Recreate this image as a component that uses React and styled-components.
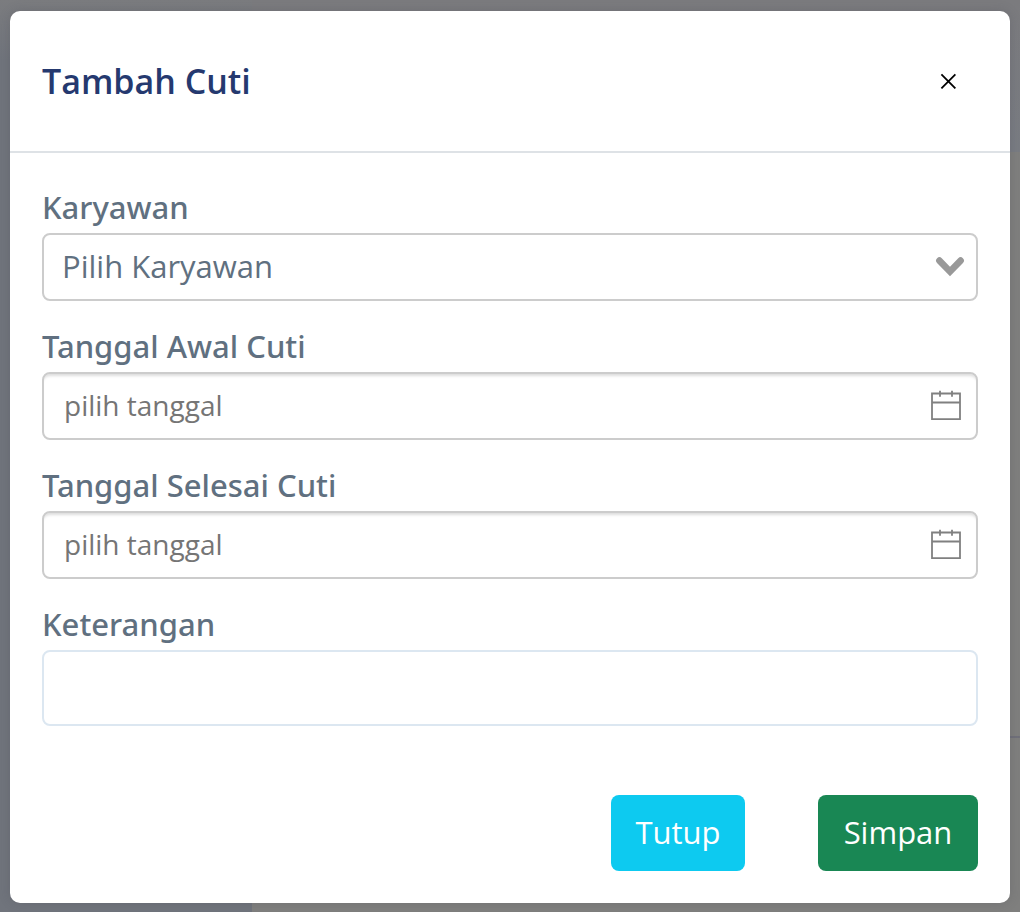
import React from "react";
import styled, { createGlobalStyle } from "styled-components";

const GlobalStyle = createGlobalStyle`
  *, *::before, *::after { box-sizing: border-box; }
  body {
    margin: 0;
    font-family: "Open Sans", "Noto Sans", sans-serif;
    font-size: 31px;
    line-height: 48px;
    color: #607080;
  }
`;

const Screen = styled.div`
  display: grid;
  min-height: 100vh;
`;

const Page = styled.div`
  grid-area: 1 / 1;
  display: grid;
  grid-template-columns: 252px 1fr;
  grid-template-rows: 152px 1fr 174px;
  background: #7f7f7e;
`;

const Sidebar = styled.div`
  grid-row: 1 / -1;
  background: linear-gradient(#7b7c7f, #70747c 60px);
`;

const TopBar = styled.div`
  background: linear-gradient(#7b7b7e, #797c83);
`;

const Panel = styled.div`
  border-bottom: 2px solid #70707a;
`;

const Overlay = styled.div`
  grid-area: 1 / 1;
  z-index: 1;
  padding: 11px 10px 9px;
`;

const Modal = styled.section`
  background: #fff;
  border-radius: 10px;
  box-shadow: 0 0 12px rgba(60, 60, 70, 0.2);
`;

const Header = styled.header`
  display: flex;
  align-items: center;
  justify-content: space-between;
  height: 142px;
  padding: 0 50px 0 32px;
  border-bottom: 2px solid #dee2e6;
`;

const Title = styled.h1`
  margin: 0;
  font-size: 34px;
  font-weight: 600;
  color: #25396f;
`;

const CloseButton = styled.button`
  display: flex;
  padding: 4px;
  border: 0;
  background: none;
  color: #000;
  cursor: pointer;
`;

const Form = styled.form`
  padding: 32px;
`;

const Fields = styled.div`
  display: flex;
  flex-direction: column;
  gap: 23px;
`;

const Field = styled.div`
  display: flex;
  flex-direction: column;
`;

const Label = styled.label`
  padding-bottom: 4px;
  font-family: "Noto Sans", "Open Sans", sans-serif;
  font-weight: 500;
  line-height: 44px;
`;

const Control = styled.div`
  display: grid;
  align-items: center;

  > * { grid-area: 1 / 1; }
  > svg {
    justify-self: end;
    margin-right: ${(p) => p.$iconInset};
    pointer-events: none;
  }
`;

const Select = styled.select`
  appearance: none;
  width: 100%;
  height: 68px;
  padding: 0 64px 2px 18px;
  border: 2px solid #ccc;
  border-radius: 8px;
  background: #fff;
  color: #607080;
  font: inherit;
  font-weight: 400;
`;

const DateInput = styled.input`
  width: 100%;
  height: 68px;
  padding: 0 64px 2px 20px;
  border: 2px solid #ccc;
  border-radius: 8px;
  background: #fff;
  box-shadow: inset 0 4px 3px -2px #ddd;
  color: #607080;
  font: inherit;
  font-size: 28px;

  &::placeholder { color: #757575; opacity: 1; }
`;

const TextInput = styled.input`
  width: 100%;
  height: 76px;
  padding: 12px 24px;
  border: 2px solid #dce7f1;
  border-radius: 8px;
  background: #fff;
  color: #607080;
  font: inherit;
`;

const Actions = styled.div`
  display: flex;
  justify-content: flex-end;
  gap: 73px;
  margin-top: 69px;
`;

const Button = styled.button`
  min-width: ${(p) => p.$width};
  height: 76px;
  padding: 0 24px 2px;
  border: 0;
  border-radius: 8px;
  background: ${(p) => p.$color};
  color: #fff;
  font: inherit;
  cursor: pointer;
`;

const CloseIcon = () => (
  <svg width="16" height="16" viewBox="0 0 16 16" fill="none" stroke="currentColor" strokeWidth="1.8" aria-hidden="true">
    <path d="M1.4 1.4L15.4 15.4M15.4 1.4L1.4 15.4" />
  </svg>
);

const ChevronIcon = () => (
  <svg width="30" height="22" viewBox="0 0 30 22" fill="none" stroke="#999" strokeWidth="6.6" strokeLinecap="round" aria-hidden="true">
    <path d="M4.4 4.6L15 15.6L25.6 4.6" />
  </svg>
);

const CalendarIcon = () => (
  <svg width="32" height="32" viewBox="0 0 32 32" fill="none" stroke="#808080" strokeWidth="1.8" aria-hidden="true">
    <path d="M2 3.5H30V29.2H2ZM2 12.5H30" />
    <path d="M10 0.8V6.8M22 0.8V6.8" />
  </svg>
);

const DateField = ({ id, label }) => (
  <Field>
    <Label htmlFor={id}>{label}</Label>
    <Control $iconInset="16px">
      <DateInput id={id} type="text" placeholder="pilih tanggal" />
      <CalendarIcon />
    </Control>
  </Field>
);

export default function App() {
  return (
    <>
      <GlobalStyle />
      <Screen>
        <Page aria-hidden="true">
          <Sidebar />
          <TopBar />
          <Panel />
        </Page>
        <Overlay>
          <Modal role="dialog" aria-modal="true" aria-labelledby="modal-title">
            <Header>
              <Title id="modal-title">Tambah Cuti</Title>
              <CloseButton type="button" aria-label="Close">
                <CloseIcon />
              </CloseButton>
            </Header>
            <Form onSubmit={(e) => e.preventDefault()}>
              <Fields>
                <Field>
                  <Label htmlFor="karyawan">Karyawan</Label>
                  <Control $iconInset="13px">
                    <Select id="karyawan" defaultValue="">
                      <option value="">Pilih Karyawan</option>
                    </Select>
                    <ChevronIcon />
                  </Control>
                </Field>
                <DateField id="awal" label="Tanggal Awal Cuti" />
                <DateField id="selesai" label="Tanggal Selesai Cuti" />
                <Field>
                  <Label htmlFor="keterangan">Keterangan</Label>
                  <TextInput id="keterangan" type="text" />
                </Field>
              </Fields>
              <Actions>
                <Button type="button" $color="#0dcaf0" $width="134px">Tutup</Button>
                <Button type="submit" $color="#198754" $width="160px">Simpan</Button>
              </Actions>
            </Form>
          </Modal>
        </Overlay>
      </Screen>
    </>
  );
}
